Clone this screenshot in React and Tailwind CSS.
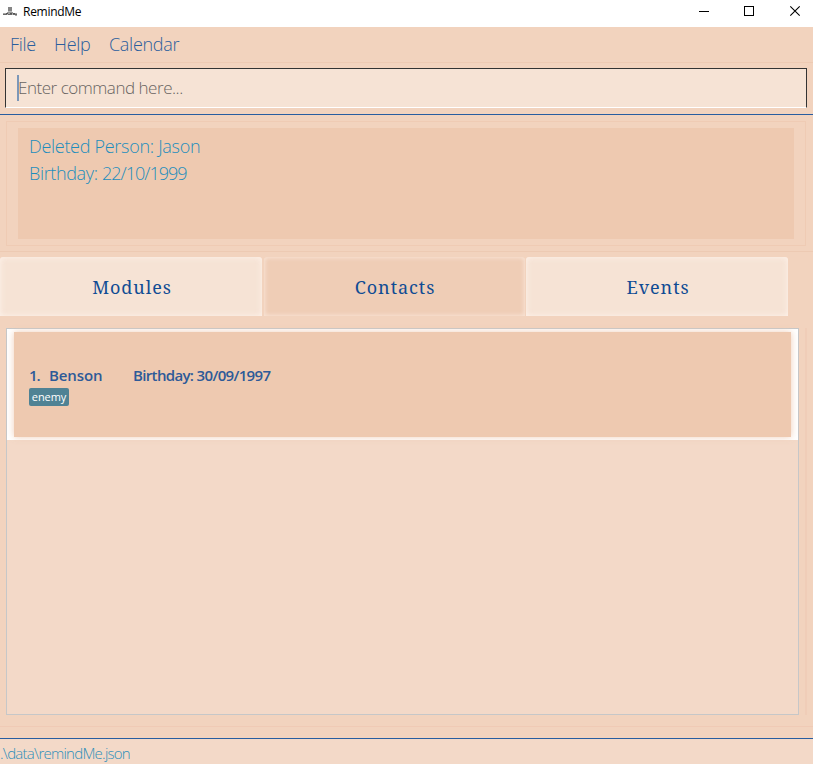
import React from "react";

const tabs = [
  { name: "Modules", width: "w-[262px]", face: "bg-[#f6e3d5] shadow-[inset_0_0_6px_0_rgba(255,245,238,0.9)]" },
  { name: "Contacts", width: "w-[261px]", face: "bg-[#efcdb6] shadow-[inset_0_0_4px_1px_rgba(250,230,216,0.9)]" },
  { name: "Events", width: "w-[262px]", face: "bg-[#f6e3d5] shadow-[inset_0_0_6px_0_rgba(255,245,238,0.9)]" },
];

function TitleBar() {
  return (
    <header className="flex h-[27px] shrink-0 items-start bg-white text-black">
      <svg className="mt-[6px] ml-[3px]" width="15" height="11" viewBox="0 0 15 11">
        <rect x="5" y="1" width="4" height="4" fill="#858585" />
        <path d="M5 5.5h4" stroke="#bbb" />
        <path d="M4 6.5h6" stroke="#999" />
        <path d="M0 7.5h14" stroke="#a5a5a5" />
        <path d="M0 8.5h14" stroke="#696969" />
        <path d="M3 7.5h2M7 7.5h2M10 7.5h2" stroke="#555" />
        <path d="M4 8.5h1M9 8.5h1" stroke="#bbb" />
        <path d="M12 9.5h2" stroke="#aaa" />
      </svg>
      <span className="mt-[4px] ml-[5px] text-[12px] leading-4 tracking-[-0.28px]">RemindMe</span>
      <svg className="ml-auto" width="120" height="27" viewBox="0 0 120 27" fill="none" stroke="#000">
        <path d="M6 11.5h10" />
        <rect x="51.5" y="6.5" width="9" height="9" />
        <path d="M97.3 6.3l9.4 9.4M106.7 6.3l-9.4 9.4" strokeWidth="1.1" />
      </svg>
    </header>
  );
}

function ResultPanel() {
  return (
    <section className="h-[137px] shrink-0 border-b border-[#edcab3] pt-[6px] pr-[7px] pl-[6px]">
      <div className="h-[125px] border border-[#efcbb4] pt-[6px] pr-[11px] pl-[11px]">
        <div className="h-[111px] bg-[#eec9b0] pt-[5px] pl-[11px] text-[18px] leading-[27px] font-light text-[#1d8dbd]">
          <p className="tracking-[-0.29px]">Deleted Person: Jason</p>
          <p className="tracking-[-0.35px]">
            Birthday: <span className="tracking-[-0.98px]">22/10/1999</span>
          </p>
        </div>
      </div>
    </section>
  );
}

function ContactCard() {
  return (
    <article className="h-[111px] bg-white pt-[3px] pr-[7px] pl-[7px]">
      <div className="h-[105px] bg-[#eec9b0] pt-[33px] pl-[15px] shadow-[0_0_7px_rgba(238,201,176,0.9)]">
        <div className="flex h-[20px] items-center text-[15px] leading-5 font-semibold text-[#2d5a98]">
          <span className="w-[20px] tracking-[-1px]">1.</span>
          <span className="w-[84px] tracking-[-0.1px]">Benson</span>
          <span className="tracking-[-0.65px]">Birthday: 30/09/1997</span>
        </div>
        <span className="mt-[3px] flex h-[18px] w-[40px] items-center justify-center rounded-[2px] bg-[#4f8294] text-[11px] leading-4 tracking-[-0.1px] text-white">
          enemy
        </span>
      </div>
    </article>
  );
}

export default function App() {
  return (
    <main className="flex h-[764px] w-[813px] flex-col overflow-hidden bg-[#f2d3be] font-['Open_Sans',sans-serif]">
      <TitleBar />
      <nav className="flex h-[36px] shrink-0 items-center gap-[18px] border-b border-[#edcab3] pl-[10px] text-[18px] font-light text-[#2a5e9d]">
        <span className="w-[26px] tracking-[-0.35px]">File</span>
        <span className="w-[37px] tracking-[-0.3px]">Help</span>
        <span className="tracking-[-0.3px]">Calendar</span>
      </nav>
      <div className="h-[52px] shrink-0 border-b border-[#285da0] pt-[5px] pr-[6px] pl-[5px]">
        <div className="flex h-[40px] items-center border-x border-t border-b border-[#333] border-b-white bg-[#f6e3d5] pl-[11px]">
          <span className="h-[26px] w-[2px] bg-[#7c97b8]" />
          <span className="-ml-px text-[17px] font-light tracking-[-0.47px] text-[#686461]">Enter command here...</span>
        </div>
      </div>
      <ResultPanel />
      <div className="flex h-[64px] shrink-0 gap-[1.5px] pt-[5px]">
        {tabs.map((tab) => (
          <button
            key={tab.name}
            className={`${tab.width} ${tab.face} h-[59px] rounded-t-[3px] pt-[2px] pl-[2px] font-['Noto_Serif','DejaVu_Serif',serif] text-[18px] tracking-[0.95px] text-[#104c94]`}
          >
            {tab.name}
          </button>
        ))}
      </div>
      <div className="flex h-[411px] shrink-0 border-b border-[#f0cab5] pt-[12px] pl-[6px]">
        <div className="h-[387px] w-[793px] border border-[#c6c7c8] bg-[#f3d9c8]">
          <ContactCard />
        </div>
        <div className="ml-[6px] h-[387px] w-[2px] bg-[#f0cdb8]" />
      </div>
      <footer className="mt-[11px] h-[26px] shrink-0 border-t border-[#285da0] bg-[#f3d9c8] pt-[4px] text-[15px] leading-[20px] font-light text-[#2d8fba]">
        <span className="inline-block tracking-[-0.75px]">.\data\remindMe.json</span>
      </footer>
    </main>
  );
}
